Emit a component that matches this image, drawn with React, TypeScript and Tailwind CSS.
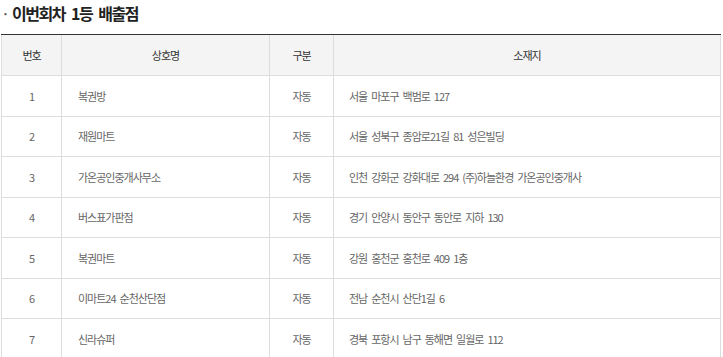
import React from 'react'

const rows = [
  { no: 1, name: '복권방', type: '자동', addr: '서울 마포구 백범로 127' },
  { no: 2, name: '재원마트', type: '자동', addr: '서울 성북구 종암로21길 81 성은빌딩' },
  { no: 3, name: '가온공인중개사무소', type: '자동', addr: '인천 강화군 강화대로 294 (주)하늘환경 가온공인중개사' },
  { no: 4, name: '버스표가판점', type: '자동', addr: '경기 안양시 동안구 동안로 지하 130' },
  { no: 5, name: '복권마트', type: '자동', addr: '강원 홍천군 홍천로 409 1층' },
  { no: 6, name: '이마트24 순천산단점', type: '자동', addr: '전남 순천시 산단1길 6' },
  { no: 7, name: '신라슈퍼', type: '자동', addr: '경북 포항시 남구 동해면 일월로 112' },
]

const font = { fontFamily: '"Noto Sans CJK KR", "Noto Sans", sans-serif' }

const App = () => {
  return (
    <div className="w-[723px] h-[357px] overflow-hidden bg-white" style={font}>
      <h3 className="flex items-center h-[26px] text-[16px] font-bold tracking-[-1.5px] [word-spacing:4px] text-[#222]">
        <span className="w-[12px] pl-[1px] text-[#555] font-normal">·</span>
        이번회차 1등 배출점
      </h3>
      <div className="ml-px mt-[8px] w-[720px] border-t border-[#333] text-[11px] tracking-[-1px] [word-spacing:2.5px]">
        <div className="grid grid-cols-[60px_208px_64px_388px] h-[41px] bg-[#f4f4f4] border-b border-[#ddd] text-[#333]">
          <div className="flex items-center justify-center border-l border-[#ddd]">번호</div>
          <div className="flex items-center justify-center border-l border-[#ddd]">상호명</div>
          <div className="flex items-center justify-center border-l border-[#ddd]">구분</div>
          <div className="flex items-center justify-center border-l border-r border-[#ddd]">소재지</div>
        </div>
        {rows.map(r => (
          <div
            key={r.no}
            className="grid grid-cols-[60px_208px_64px_388px] h-[40.5px] border-b border-[#ddd] text-[#666]"
          >
            <div className="flex items-center justify-center border-l border-[#ddd]">{r.no}</div>
            <div className="flex items-center pl-[16px] border-l border-[#ddd]">{r.name}</div>
            <div className="flex items-center justify-center border-l border-[#ddd]">{r.type}</div>
            <div className="flex items-center pl-[15px] border-l border-r border-[#ddd]">{r.addr}</div>
          </div>
        ))}
      </div>
    </div>
  )
}

export default App
